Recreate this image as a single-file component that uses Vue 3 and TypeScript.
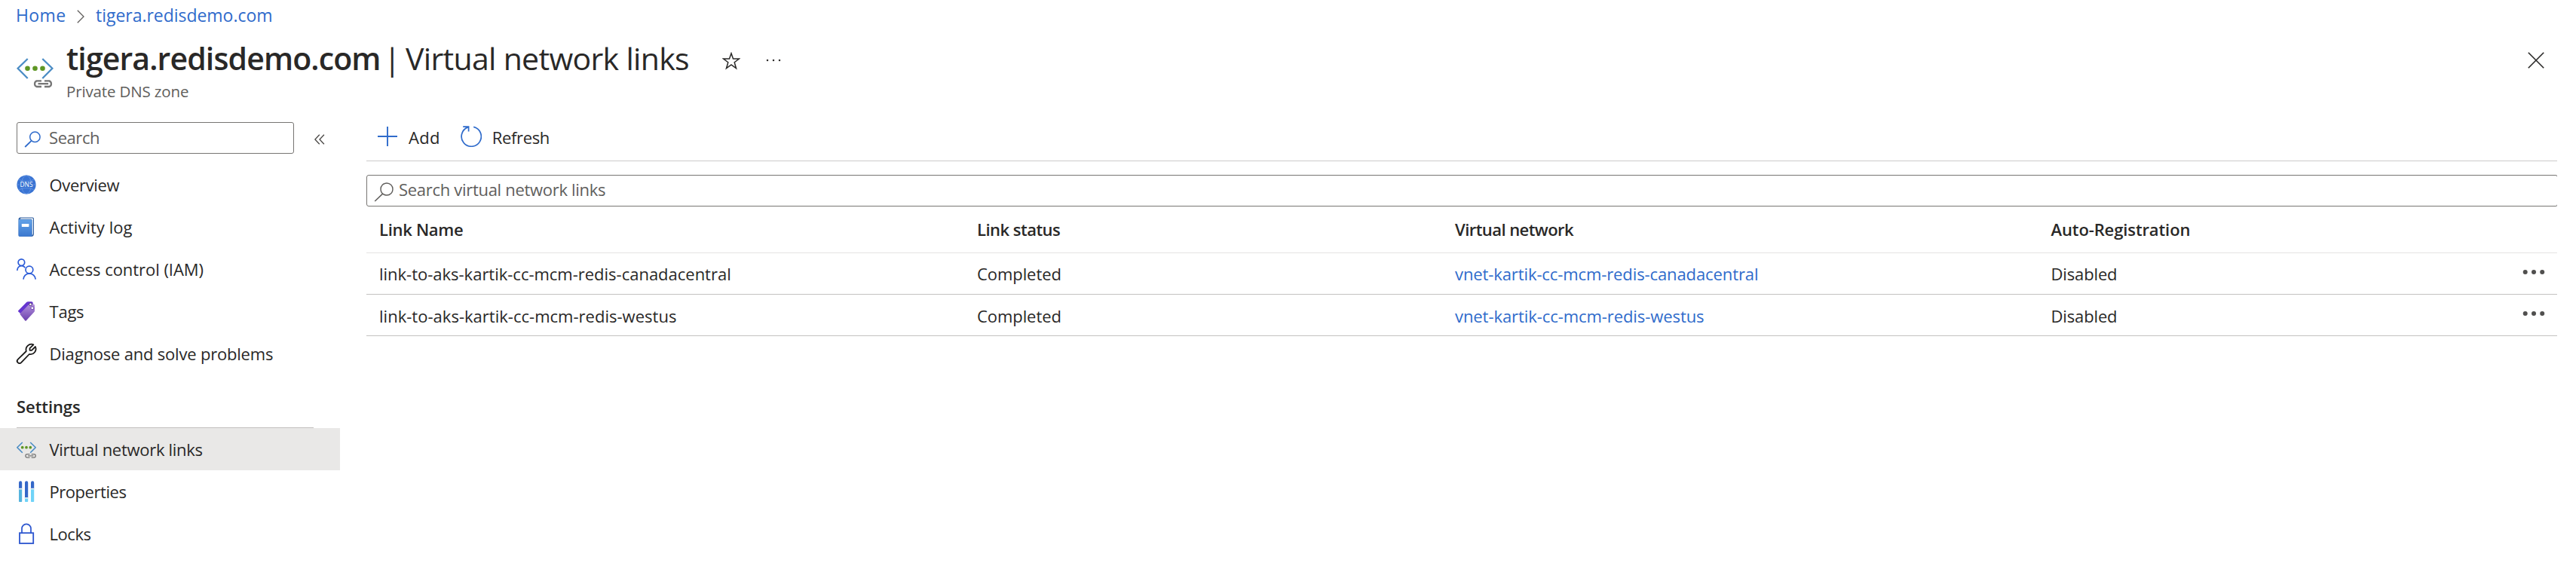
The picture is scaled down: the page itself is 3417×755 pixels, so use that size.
<script setup lang="ts">
interface NavItem {
  id: string
  label: string
  spacing: number
}

interface LinkRow {
  name: string
  nameSpacing: number
  status: string
  network: string
  networkSpacing: number
  registration: string
}

const generalItems: NavItem[] = [
  { id: 'dns', label: 'Overview', spacing: -0.33 },
  { id: 'log', label: 'Activity log', spacing: 0.02 },
  { id: 'people', label: 'Access control (IAM)', spacing: -0.05 },
  { id: 'tag', label: 'Tags', spacing: -0.23 },
  { id: 'wrench', label: 'Diagnose and solve problems', spacing: -0.2 },
]

const settingsItems: NavItem[] = [
  { id: 'vnet', label: 'Virtual network links', spacing: -0.29 },
  { id: 'props', label: 'Properties', spacing: -0.45 },
  { id: 'lock', label: 'Locks', spacing: -0.45 },
]

const activeId = 'vnet'

const rows: LinkRow[] = [
  {
    name: 'link-to-aks-kartik-cc-mcm-redis-canadacentral',
    nameSpacing: -0.01,
    status: 'Completed',
    network: 'vnet-kartik-cc-mcm-redis-canadacentral',
    networkSpacing: -0.1,
    registration: 'Disabled',
  },
  {
    name: 'link-to-aks-kartik-cc-mcm-redis-westus',
    nameSpacing: 0.02,
    status: 'Completed',
    network: 'vnet-kartik-cc-mcm-redis-westus',
    networkSpacing: -0.07,
    registration: 'Disabled',
  },
]
</script>

<template>
  <div class="page">
    <nav class="crumbs">
      <a class="crumb-home">Home</a>
      <svg class="crumb-sep" viewBox="0 0 10 18" width="10" height="18">
        <path d="M.8.8 9 9 .8 17.2" fill="none" stroke="#605e5c" stroke-width="1.3" />
      </svg>
      <a>tigera.redisdemo.com</a>
    </nav>

    <header class="header">
      <svg class="header-icon" viewBox="0 0 49 40" width="49" height="40">
        <path d="M14.7 1 1.6 13.7 14.7 27M34.3 1l13.1 12.7L34.3 27" fill="none" stroke="#4a8cc4" stroke-width="2.3" />
        <g fill="#5e9624"><circle cx="14.5" cy="13.7" r="3.3" /><circle cx="24.5" cy="13.7" r="3.3" /><circle cx="34.5" cy="13.7" r="3.3" /></g>
        <path d="M33 30.4h-6.4a4.1 4.1 0 0 0 0 7.6H33M37 30.4h6.4a4.1 4.1 0 0 1 0 7.6H37M28.5 34.2h13.6" fill="none" stroke="#767676" stroke-width="2.3" />
      </svg>
      <div class="titles">
        <div class="title-line">
          <h1 class="title">
            <span class="title-name">tigera.redisdemo.com</span><span class="title-bar">|</span><span class="title-page">Virtual network links</span>
          </h1>
          <svg class="star" viewBox="0 0 24 24" width="24" height="24">
            <path d="M12 1.8 14.5 9h7.9l-6.2 4.7 2.3 8-6.5-4.8-6.5 4.8 2.3-8L1.6 9h7.9z" fill="none" stroke="#292827" stroke-width="1.5" />
          </svg>
          <svg class="dots" viewBox="0 0 20 4" width="20" height="4" fill="#323130">
            <circle cx="2" cy="2" r="1.25" /><circle cx="10" cy="2" r="1.25" /><circle cx="18" cy="2" r="1.25" />
          </svg>
        </div>
        <div class="subtitle">Private DNS zone</div>
      </div>
      <svg class="close" viewBox="0 0 22 22" width="22" height="22">
        <path d="m.8.8 20.4 20.4M21.2.8.8 21.2" stroke="#292827" stroke-width="1.6" />
      </svg>
    </header>

    <div class="body">
      <aside class="sidebar">
        <div class="side-search-row">
          <div class="side-search">
            <svg viewBox="0 0 22 22" width="22" height="22">
              <path d="M9.6 12.8 1.2 21" stroke="#2f6bcb" stroke-width="1.8" />
              <circle cx="14.4" cy="7.8" r="6.7" fill="none" stroke="#2f6bcb" stroke-width="1.5" />
            </svg>
            <span>Search</span>
          </div>
          <svg class="collapse" viewBox="0 0 14 14" width="14" height="14">
            <path d="M6.8.8.9 7l5.9 6.2M12.9.8 7 7l5.9 6.2" fill="none" stroke="#484644" stroke-width="1.3" />
          </svg>
        </div>

        <ul class="nav">
          <li v-for="item in generalItems" :key="item.id" class="nav-item">
            <svg v-if="item.id === 'dns'" viewBox="0 0 26 26" width="26" height="26">
              <circle cx="13" cy="13" r="12.6" fill="#3a74d3" />
              <g fill="none" stroke="#6b9be6" stroke-width=".8">
                <ellipse cx="13" cy="13" rx="6.5" ry="12.2" />
                <path d="M3 6c5 3.2 15 3.2 20 0M3 20c5-3.2 15-3.2 20 0M.6 13h24.8" />
              </g>
              <rect x="3.6" y="8.8" width="18.8" height="8.4" fill="#3a74d3" />
              <text x="13" y="16.2" text-anchor="middle" textLength="17" lengthAdjust="spacingAndGlyphs" class="dns-text">DNS</text>
            </svg>
            <svg v-else-if="item.id === 'log'" viewBox="0 0 26 26" width="26" height="26">
              <defs>
                <linearGradient id="bookFill" x1="0" y1="0" x2="0" y2="1">
                  <stop offset="0" stop-color="#62a2e8" /><stop offset="1" stop-color="#3b78cf" />
                </linearGradient>
              </defs>
              <path d="M2.6 2.6C3 1 4 .5 5.4.5h15.8q1.8 0 1.8 1.8v20.2q0 2.4-2 3.2H4.2q-1.6 0-1.6-1.6z" fill="#2c5c9e" />
              <path d="M4.6 2.8 5.6 1.5h15.2q1.1 0 1.1 1.1V22q0 1.6-1.4 2.2V4.2q0-1.4-1.4-1.4z" fill="#fff" />
              <path d="M2.6 3.3h16.6q1.3 0 1.3 1.3v19.8q0 1.3-1.3 1.3H4q-1.4 0-1.4-1.3z" fill="url(#bookFill)" />
              <rect x="6.8" y="9" width="9.6" height="4" rx=".4" fill="#fff" />
            </svg>
            <svg v-else-if="item.id === 'people'" viewBox="0 0 26 26" width="26" height="26" class="over" fill="none" stroke="#2b5bd7" stroke-width="1.7">
              <circle cx="6.4" cy="4.2" r="4.3" />
              <path d="M.8 15c0-3.5 2.4-6.3 5.6-6.3 2.3 0 3.8 1 4.8 2.6" />
              <circle cx="16.9" cy="14" r="4.9" />
              <path d="M9 26.6c.3-4.3 3.5-7.6 8-7.6s7.7 3.3 8.2 7.6" />
            </svg>
            <svg v-else-if="item.id === 'tag'" viewBox="0 0 26 26" width="26" height="26" class="over">
              <defs>
                <linearGradient id="tagFill" x1="0" y1="0" x2="0" y2="1">
                  <stop offset="0" stop-color="#b493dd" /><stop offset="1" stop-color="#6b40ad" />
                </linearGradient>
              </defs>
              <path d="M2.4 12 13.2.9q.8-.7 2-.7h4.6q1.9 0 1.9 1.9v5L5.4 16.2 2.3 13.4q-.7-.7.1-1.4z" fill="#6535cf" />
              <path d="M4.9 15.8 16 4.3q.7-.7 1.8-.7h4.5q1.7 0 1.7 1.8v6.8q0 1-.7 1.7L12.7 25.4q-.7.7-1.4 0l-6.4-8q-.8-.8 0-1.6z" fill="url(#tagFill)" />
              <circle cx="18.4" cy="3.8" r="1.8" fill="#fff" stroke="#38215f" stroke-width=".8" />
              <circle cx="20.9" cy="8.8" r="2" fill="#fff" stroke="#6b40ad" stroke-width="1" />
            </svg>
            <svg v-else viewBox="0 0 26 26" width="26" height="26" class="over" fill="none" stroke="#1b1a19" stroke-width="1.8" stroke-linejoin="round">
              <path d="M22.4 1.3A7.2 7.2 0 0 0 12.8 10L1.7 20.8a3.1 3.1 0 0 0 4.4 4.4L16.8 14A7.2 7.2 0 0 0 24.9 4L20 8.8h-2.5V6.1z" />
            </svg>
            <span :style="{ letterSpacing: item.spacing + 'px' }">{{ item.label }}</span>
          </li>
        </ul>

        <h2 class="group">Settings</h2>
        <ul class="nav nav-settings">
          <li v-for="item in settingsItems" :key="item.id" class="nav-item" :class="{ active: item.id === activeId }">
            <svg v-if="item.id === 'vnet'" viewBox="0 -6.5 49 49" width="26" height="26">
              <path d="M14.7 1 1.6 13.7 14.7 27M34.3 1l13.1 12.7L34.3 27" fill="none" stroke="#4a8cc4" stroke-width="3" />
              <g fill="#5e9624"><circle cx="14.5" cy="13.7" r="3.5" /><circle cx="24.5" cy="13.7" r="3.5" /><circle cx="34.5" cy="13.7" r="3.5" /></g>
              <path d="M33 30.4h-6.4a4.1 4.1 0 0 0 0 8.4H33M37 30.4h6.4a4.1 4.1 0 0 1 0 8.4H37M28.5 34.6h13.6" fill="none" stroke="#767676" stroke-width="2.4" />
            </svg>
            <svg v-else-if="item.id === 'props'" viewBox="0 0 26 26" width="26" height="26" class="over">
              <g fill="#6fd3f8"><rect x="3" y="9" width="4.2" height="18" rx=".8" fill="#55b4de" /><rect x="11" y="20" width="4.2" height="7" rx=".8" /><rect x="19" y="9" width="4.2" height="18" rx=".8" /></g>
              <path d="M3 9.6V1.4a2.1 2.1 0 0 1 4.2 0v8.2zM11 21.6V1.4a2.1 2.1 0 0 1 4.2 0v20.2zM19 9.6V1.4a2.1 2.1 0 0 1 4.2 0v8.2z" fill="#3467c8" />
              <g fill="#e6eef2"><rect x="2.2" y="8.8" width="5.8" height="1.6" /><rect x="10.2" y="21" width="5.8" height="1.6" /><rect x="18.2" y="8.8" width="5.8" height="1.6" /></g>
            </svg>
            <svg v-else viewBox="0 0 26 26" width="26" height="26" class="over" fill="none" stroke="#2b55cf">
              <path d="M7 12.4V6.3a6 6 0 0 1 12 0v6.1" stroke-width="1.7" />
              <rect x="4" y="12.2" width="18.2" height="13.8" stroke-width="1.8" />
            </svg>
            <span :style="{ letterSpacing: item.spacing + 'px' }">{{ item.label }}</span>
          </li>
        </ul>
      </aside>

      <main class="main">
        <div class="toolbar">
          <button class="tool">
            <svg viewBox="0 0 28 28" width="28" height="28">
              <path d="M14 1v26M1 14h26" stroke="#2f6bcb" stroke-width="1.9" />
            </svg>
            <span class="tool-add">Add</span>
          </button>
          <button class="tool tool-second">
            <svg viewBox="0 0 28 28" width="28" height="28" fill="none" stroke="#2f6bcb" stroke-width="1.7">
              <path d="M17.2 1.4A13.1 13.1 0 1 1 9.6 1.9M3.2 1.2h7.4v6.4" />
            </svg>
            <span class="tool-refresh">Refresh</span>
          </button>
        </div>

        <div class="filter">
          <svg viewBox="0 0 26 26" width="26" height="26">
            <path d="M11.6 15.1 1.2 25" stroke="#605e5c" stroke-width="1.5" />
            <circle cx="17" cy="9" r="8" fill="none" stroke="#605e5c" stroke-width="1.4" />
          </svg>
          <span>Search virtual network links</span>
        </div>

        <div class="grid head">
          <span class="h-name">Link Name</span>
          <span class="h-status">Link status</span>
          <span class="h-net">Virtual network</span>
          <span class="h-reg">Auto-Registration</span>
        </div>
        <div class="rows">
          <div v-for="row in rows" :key="row.name" class="grid row">
            <span :style="{ letterSpacing: row.nameSpacing + 'px' }">{{ row.name }}</span>
            <span class="c-status">{{ row.status }}</span>
            <a :style="{ letterSpacing: row.networkSpacing + 'px' }">{{ row.network }}</a>
            <span class="c-reg">{{ row.registration }}</span>
            <svg class="more" viewBox="0 0 30 8" width="30" height="8" fill="#504f4e">
              <circle cx="3.7" cy="4" r="3" /><circle cx="15" cy="4" r="3" /><circle cx="26.2" cy="4" r="3" />
            </svg>
          </div>
        </div>
      </main>
    </div>
  </div>
</template>

<style>
body {
  margin: 0;
  background: #fff;
}
</style>

<style scoped>
.page {
  width: 3417px;
  height: 755px;
  overflow: hidden;
  background: #fff;
  color: #292827;
  font-family: 'Open Sans', 'Noto Sans', sans-serif;
  font-size: 22px;
  white-space: nowrap;
}

svg {
  display: block;
  flex: none;
}

svg.over {
  overflow: visible;
}

a {
  color: #2f6bcb;
}

.crumbs {
  display: flex;
  align-items: center;
  height: 40px;
  padding-left: 21px;
  font-size: 23px;
  letter-spacing: -0.03px;
}

.crumb-home {
  width: 81px;
  letter-spacing: 0.4px;
}

.crumb-sep {
  margin: 3px 15px 0 0;
}

.header {
  display: flex;
  height: 97px;
  box-sizing: border-box;
  padding: 9px 42px 0 22px;
}

.header-icon {
  margin-top: 28px;
}

.titles {
  flex: 1;
  padding-left: 17px;
}

.title-line {
  display: flex;
  height: 56px;
}

.title {
  display: flex;
  width: 870px;
  margin: 0;
  font-size: 41px;
  font-weight: 400;
  line-height: 56px;
}

.title-name {
  width: 421px;
  font-weight: 600;
  letter-spacing: -0.87px;
}

.title-bar {
  width: 29px;
}

.title-page {
  letter-spacing: -0.68px;
}

.star {
  margin-top: 20px;
}

.dots {
  margin: 29px 0 0 34px;
}

.subtitle {
  line-height: 32px;
  font-size: 20.5px;
  letter-spacing: -0.14px;
  color: #605e5c;
}

.close {
  margin-top: 20px;
}

.body {
  display: flex;
}

.sidebar {
  width: 451px;
  padding-top: 25px;
}

.side-search-row {
  display: flex;
  align-items: center;
  padding-left: 22px;
}

.side-search {
  display: flex;
  align-items: center;
  gap: 11px;
  box-sizing: border-box;
  width: 368px;
  height: 42px;
  padding: 0 0 2px 9px;
  border: 1px solid #777573;
  border-radius: 3px;
  color: #605e5c;
  letter-spacing: -0.43px;
}

.side-search svg {
  margin-top: 5px;
}

.collapse {
  margin: 3px 0 0 27px;
}

.nav {
  margin: 13px 0 0;
  padding: 0;
  list-style: none;
}

.nav-settings {
  margin-top: 0;
}

.nav-item {
  display: flex;
  align-items: center;
  gap: 17.5px;
  height: 56px;
  padding-left: 22px;
}

.nav-item.active {
  background: #e9e8e7;
}

.dns-text {
  fill: #fff;
  font-size: 9px;
}

.group {
  box-sizing: border-box;
  width: 394px;
  height: 71px;
  margin: 0 0 0 22px;
  padding-top: 15px;
  border-bottom: 1px solid #c2c0be;
  font-size: 22px;
  font-weight: 600;
  line-height: 54px;
  letter-spacing: -0.07px;
}

.main {
  width: 2906px;
  margin-left: 35px;
  overflow: hidden;
}

.toolbar {
  display: flex;
  align-items: center;
  box-sizing: border-box;
  height: 77px;
  padding: 14px 0 0 14px;
  border-bottom: 1px solid #cccbca;
}

.tool {
  display: flex;
  align-items: center;
  gap: 14px;
  padding: 0;
  border: 0;
  background: none;
  color: inherit;
  font: inherit;
}

.tool svg {
  margin-top: -2px;
}

.tool-second {
  margin-left: 27px;
}

.tool-add {
  letter-spacing: 0.31px;
}

.tool-refresh {
  letter-spacing: -0.36px;
}

.filter {
  display: flex;
  align-items: center;
  gap: 7px;
  box-sizing: border-box;
  height: 42px;
  margin: 18px -1px 0 0;
  padding: 0 0 4px 9px;
  border: 1px solid #777573;
  border-radius: 3px;
  color: #605e5c;
  letter-spacing: -0.3px;
}

.filter svg {
  margin-top: 8px;
}

.grid {
  display: grid;
  grid-template-columns: 793px 634px 790.5px 1fr 30px;
  box-sizing: border-box;
  padding: 0 16px 0 17px;
}

.head {
  height: 62px;
  border-bottom: 1px solid #e4e3e2;
  font-weight: 600;
  line-height: 61px;
}

.row {
  height: 55px;
  border-bottom: 1px solid #c3c2c1;
  line-height: 56px;
}

.row:first-child {
  line-height: 54px;
}

.h-name {
  letter-spacing: -0.3px;
}

.h-status {
  letter-spacing: -0.52px;
}

.h-net {
  letter-spacing: -0.56px;
}

.h-reg {
  letter-spacing: -0.11px;
}

.c-status {
  letter-spacing: -0.07px;
}

.c-reg {
  letter-spacing: -0.14px;
}

.more {
  margin-top: 21px;
}
</style>
